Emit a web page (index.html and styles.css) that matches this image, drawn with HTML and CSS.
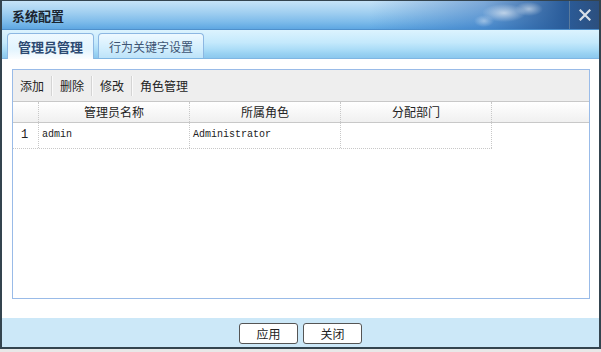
FILE: index.html
```html
<!DOCTYPE html>
<html lang="zh">
<head>
<meta charset="utf-8">
<link rel="stylesheet" href="styles.css">
</head>
<body>
<div class="dialog">
  <div class="titlebar">
    <span class="title">系统配置</span>
    <span class="cloud"></span>
    <span class="close">
      <svg width="12" height="12" viewBox="0 0 12 12"><path d="M1.5 1.5 L10.5 10.5 M10.5 1.5 L1.5 10.5" stroke="#d9e0e8" stroke-width="2.2" stroke-linecap="square"/></svg>
    </span>
  </div>
  <div class="tabstrip">
    <div class="tab active">管理员管理</div>
    <div class="tab">行为关键字设置</div>
  </div>
  <div class="content">
    <div class="panel">
      <div class="toolbar">
        <span class="tbtn">添加</span><span class="sep"></span>
        <span class="tbtn">删除</span><span class="sep"></span>
        <span class="tbtn">修改</span><span class="sep"></span>
        <span class="tbtn">角色管理</span>
      </div>
      <div class="grid">
        <div class="hrow">
          <div class="cell num"></div>
          <div class="cell c1">管理员名称</div>
          <div class="cell c2">所属角色</div>
          <div class="cell c3">分配部门</div>
          <div class="cell fill"></div>
        </div>
        <div class="drow">
          <div class="cell num">1</div>
          <div class="cell c1 mono">admin</div>
          <div class="cell c2 mono">Administrator</div>
          <div class="cell c3"></div>
        </div>
      </div>
    </div>
  </div>
  <div class="footer">
    <button class="btn">应用</button>
    <button class="btn">关闭</button>
  </div>
</div>
<div class="under"></div>
</body>
</html>
```

FILE: styles.css
```css
html, body {
  margin: 0;
  padding: 0;
  background: #ffffff;
  font-family: "Noto Sans CJK SC", "Liberation Sans", sans-serif;
  font-size: 12px;
  color: #222;
}
.dialog {
  width: 597px;
  border: 2px solid #34444f;
  border-top: 1px solid #34444f;
  background: #fff;
}
.titlebar {
  height: 28px;
  position: relative;
  display: flex;
  align-items: center;
  background: linear-gradient(to bottom, #c6e3f7 0%, #a2d0f1 40%, #7dbbea 75%, #5ea7e2 100%);
  border-bottom: 1px solid #4f90cc;
}
.cloud {
  position: absolute;
  right: 0;
  top: 0;
  width: 230px;
  height: 28px;
  background:
    radial-gradient(ellipse 22px 9px at 135px 12px, rgba(255,255,255,0.6), rgba(255,255,255,0) 100%),
    radial-gradient(ellipse 14px 7px at 160px 8px, rgba(255,255,255,0.5), rgba(255,255,255,0) 100%),
    radial-gradient(ellipse 10px 6px at 115px 20px, rgba(255,255,255,0.4), rgba(255,255,255,0) 100%),
    linear-gradient(to right, rgba(40,90,160,0) 0%, rgba(40,100,180,0.45) 50%, #2a5c9a 85%, #2c4f7e 100%);
}
.title {
  padding-left: 10px;
  font-weight: bold;
  font-size: 13px;
  color: #1b2530;
  position: relative;
}
.close {
  position: absolute;
  right: 0;
  top: 0;
  width: 29px;
  height: 28px;
  border-left: 1px solid #5a7a9c;
  display: flex;
  align-items: center;
  justify-content: center;
}
.tabstrip {
  height: 28px;
  display: flex;
  align-items: flex-end;
  padding-left: 5px;
  gap: 4px;
  background: linear-gradient(to bottom, #dcf3fe 0%, #c4e9fc 45%, #aadcf7 70%, #98d1f2 85%, #8cc8ee 100%);
  border-bottom: 1px solid #7fb6e3;
}
.tab {
  height: 24px;
  padding: 0 10px;
  border: 1px solid #8cb7e2;
  border-bottom: none;
  border-radius: 4px 4px 0 0;
  display: flex;
  align-items: center;
  font-size: 12px;
  color: #3d5473;
  background: linear-gradient(to bottom, #eef9ff 0%, #d2eefd 60%, #bde3f9 100%);
}
.tab.active {
  font-weight: bold;
  font-size: 13px;
  color: #2c4a72;
  height: 25px;
  margin-bottom: -1px;
  background: linear-gradient(to bottom, #eef9ff 0%, #e2f4fe 60%, #fafdff 100%);
}
.content {
  height: 259px;
  padding: 10px 9px 0 10px;
  box-sizing: border-box;
}
.panel {
  height: 230px;
  border: 1px solid #99bbe8;
  box-sizing: border-box;
}
.toolbar {
  height: 31px;
  background: #eeeeee;
  display: flex;
  align-items: center;
  padding-left: 1px;
}
.tbtn {
  padding: 0 7px 0 6px;
  font-size: 12px;
  color: #222;
}
.sep {
  width: 1px;
  height: 20px;
  background: #d4d4d4;
  border-right: 1px solid #fafafa;
  margin-right: 1px;
}
.hrow {
  display: flex;
  height: 20px;
  border-top: 1px solid #c8c8c8;
  border-bottom: 1px solid #c8c8c8;
  background: linear-gradient(to bottom, #ffffff, #f0f0f0);
}
.hrow .cell {
  text-align: center;
  line-height: 20px;
  font-size: 12px;
}
.cell {
  box-sizing: border-box;
  border-right: 1px dotted #c8c8c8;
}
.num { width: 26px; }
.c1 { width: 151px; }
.c2 { width: 151px; }
.c3 { width: 151px; }
.fill { border-right: none; flex: 1; }
.drow {
  display: flex;
  height: 25px;
  width: 479px;
  border-bottom: 1px dotted #c8c8c8;
}
.drow .cell {
  line-height: 24px;
}
.drow .num {
  padding-left: 8px;
  font-family: "Liberation Mono", monospace;
  font-size: 12px;
}
.mono {
  font-family: "Liberation Mono", "DejaVu Sans Mono", monospace;
  font-size: 10px;
  padding-left: 3px;
}
.footer {
  height: 29px;
  background: #cce8f8;
  display: flex;
  justify-content: center;
  align-items: center;
  gap: 5px;
}
.btn {
  width: 59px;
  height: 21px;
  margin-top: 1px;
  border: 1px solid #555;
  border-radius: 3px;
  background: #fff;
  font-family: "Noto Sans CJK SC", sans-serif;
  font-size: 12px;
  color: #222;
  padding: 0;
}
.under {
  height: 6px;
  background: #e8e8e8;
}
```
